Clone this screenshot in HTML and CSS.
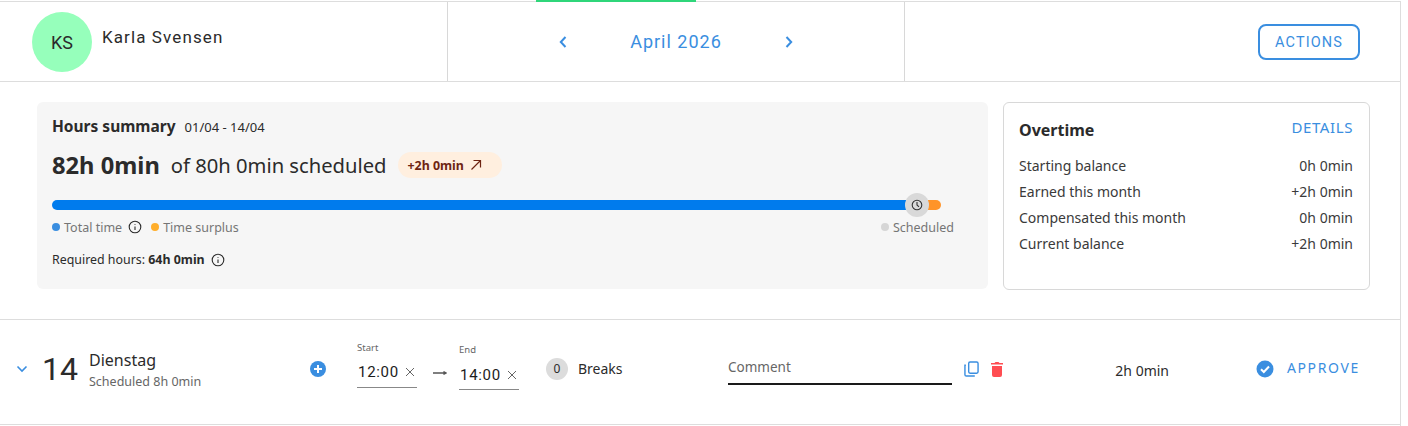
FILE: index.html
```html
<!DOCTYPE html>
<html lang="en">
<head>
  <meta charset="UTF-8" />
  <title>Timesheet</title>
  <link rel="stylesheet" href="styles.css">
</head>
<body>
  <div class="page">
    <header class="top-bar">
      <div class="employee">
        <div class="avatar">KS</div>
        <span class="employee-name">Karla Svensen</span>
      </div>
      <div class="month-nav">
        <span class="month-tab"></span>
        <svg class="chevron" width="12" height="14" viewBox="0 0 12 14"><path d="M8.500 2 L3.800 7 L8.500 12" /></svg>
        <span class="month-label">April 2026</span>
        <svg class="chevron" width="12" height="14" viewBox="0 0 12 14"><path d="M3.500 2 L8.200 7 L3.500 12" /></svg>
      </div>
      <div class="top-actions">
        <button class="actions-btn">ACTIONS</button>
      </div>
    </header>

    <section class="summary-row">
      <!-- Hours summary -->
      <div class="hours-card">
        <div class="hours-title"><strong>Hours summary</strong><span>01/04 - 14/04</span></div>
        <div class="hours-total">
          <strong>82h 0min</strong>
          <span>of 80h 0min scheduled</span>
          <span class="surplus-pill">+2h 0min
            <svg width="12" height="12" viewBox="0 0 12 12"><path d="M1.500 10.500 L10.500 1.500 M3.500 1.500 H10.500 V8.500" /></svg>
          </span>
        </div>
        <div class="progress">
          <div class="progress-blue"></div>
          <div class="progress-orange"></div>
          <div class="progress-knob">
            <svg width="12" height="12" viewBox="0 0 12 12"><circle cx="6" cy="6" r="4.800" /><path d="M6 3 V6 L8 7.800" /></svg>
          </div>
        </div>
        <div class="legend">
          <span class="dot dot-blue"></span><span>Total time</span>
          <svg class="info" width="14" height="14" viewBox="0 0 14 14"><circle cx="7" cy="7" r="5.800" /><path d="M7 6.500 V10 M7 4 V4.800" /></svg>
          <span class="dot dot-orange"></span><span>Time surplus</span>
          <span class="legend-right"><span class="dot dot-grey"></span><span>Scheduled</span></span>
        </div>
        <div class="required"><span>Required hours:&nbsp;</span><strong>64h 0min</strong>
          <svg class="info" width="14" height="14" viewBox="0 0 14 14"><circle cx="7" cy="7" r="5.800" /><path d="M7 6.500 V10 M7 4 V4.800" /></svg>
        </div>
      </div>

      <!-- Overtime -->
      <div class="overtime-card">
        <div class="overtime-head"><strong>Overtime</strong><span class="details-link">DETAILS</span></div>
        <div class="overtime-line"><span>Starting balance</span><span>0h 0min</span></div>
        <div class="overtime-line"><span>Earned this month</span><span>+2h 0min</span></div>
        <div class="overtime-line"><span>Compensated this month</span><span>0h 0min</span></div>
        <div class="overtime-line"><span>Current balance</span><span>+2h 0min</span></div>
      </div>
    </section>

    <section class="day-row">
      <svg class="day-toggle" width="12" height="8" viewBox="0 0 12 8"><path d="M1.500 1.500 L6 6 L10.500 1.500" /></svg>
      <span class="day-num">14</span>
      <div class="day-info">
        <div class="day-name">Dienstag</div>
        <div class="day-sched">Scheduled 8h 0min</div>
      </div>
      <svg class="add-btn" width="18" height="18" viewBox="0 0 18 18"><circle cx="9" cy="9" r="8" /><path d="M9 5 V13 M5 9 H13" /></svg>
      <div class="time-field">
        <label>Start</label>
        <div class="time-value">12:00<svg class="clear" width="10" height="10" viewBox="0 0 10 10"><path d="M1 1 L9 9 M9 1 L1 9" /></svg></div>
      </div>
      <svg class="time-arrow" width="14" height="8" viewBox="0 0 14 8"><path d="M0 4 H12.500 M10.500 2.500 L13 4 L10.500 5.500" /></svg>
      <div class="time-field time-field-end">
        <label>End</label>
        <div class="time-value">14:00<svg class="clear" width="10" height="10" viewBox="0 0 10 10"><path d="M1 1 L9 9 M9 1 L1 9" /></svg></div>
      </div>
      <span class="break-count">0</span>
      <span class="break-label">Breaks</span>
      <div class="comment">Comment</div>
      <svg class="copy-icon" width="15" height="16" viewBox="0 0 16 17"><rect x="5" y="1" width="10" height="12" rx="1.500" /><path d="M2 4.500 H1 V14.500 A1.500 1.500 0 0 0 2.500 16 H11.500" /></svg>
      <svg class="trash-icon" width="14" height="16" viewBox="0 0 14 16"><path d="M2 5 H12 V14 A2 2 0 0 1 10 16 H4 A2 2 0 0 1 2 14 Z M1 2 H4.500 L5.500 1 H8.500 L9.500 2 H13 V3.600 H1 Z" /></svg>
      <span class="day-total">2h 0min</span>
      <svg class="approve-icon" width="18" height="18" viewBox="0 0 18 18"><circle cx="9" cy="9" r="8.500" /><path d="M5 9.300 L7.800 12 L13 6.500" /></svg>
      <span class="approve-label">APPROVE</span>
    </section>
  </div>
</body>
</html>
```

FILE: styles.css
```css
body {
  margin: 0;
  background: #fff;
  color: #2b2b2b;
  font-family: 'Noto Sans', sans-serif;
  overflow: hidden;
}
.page {
  width: 1400px;
  height: 426px;
  border-right: 1px solid #ddd;
}
.top-bar {
  display: flex;
  height: 81px;
  box-sizing: border-box;
  margin-top: 1px;
  border-top: 1px solid #ddd;
  border-bottom: 1px solid #ddd;
}
.employee {
  width: 448px;
  display: flex;
  align-items: flex-start;
  padding: 10px 0 0 32px;
  box-sizing: border-box;
  border-right: 1px solid #d8d8d8;
}
.avatar {
  width: 60px;
  height: 60px;
  border-radius: 50%;
  background: #96ffbb;
  display: flex;
  align-items: center;
  justify-content: center;
  font-family: 'Roboto', sans-serif;
  font-size: 18px;
}
.employee-name {
  margin: 15px 0 0 10px;
  font-family: 'Roboto', sans-serif;
  font-size: 17px;
  letter-spacing: 1.100px;
}
.month-nav {
  position: relative;
  width: 457px;
  box-sizing: border-box;
  display: flex;
  align-items: center;
  justify-content: center;
  gap: 61px;
  border-right: 1px solid #d8d8d8;
  color: #3a8ee0;
}
.month-tab {
  position: absolute;
  top: -2px;
  left: 88px;
  width: 160px;
  height: 2px;
  background: #2fd67a;
}
.chevron path {
  fill: none;
  stroke: #3a8ee0;
  stroke-width: 2;
}
.month-label {
  font-family: 'Roboto', sans-serif;
  font-size: 18px;
  letter-spacing: 1px;
}
.top-actions {
  flex: 1;
  display: flex;
  align-items: center;
  justify-content: flex-end;
  padding-right: 40px;
}
.actions-btn {
  width: 102px;
  height: 36px;
  padding-top: 2px;
  background: #fff;
  border: 2px solid #3a8ee0;
  border-radius: 8px;
  color: #3a8ee0;
  font-family: 'Roboto', sans-serif;
  font-size: 14.500px;
  letter-spacing: 1.100px;
}

.summary-row {
  display: flex;
  gap: 15px;
  padding: 20px 0 0 37px;
  height: 238px;
  box-sizing: border-box;
  border-bottom: 1px solid #ddd;
}
.hours-card {
  width: 951px;
  height: 187px;
  box-sizing: border-box;
  padding: 13px 15px 0;
  background: #f6f6f6;
  border-radius: 6px;
  font-size: 12px;
}
.hours-title {
  display: flex;
  align-items: baseline;
  gap: 9px;
  font-size: 13px;
}
.hours-title strong {
  font-size: 15.500px;
  font-weight: 700;
}
.hours-total {
  display: flex;
  align-items: center;
  margin-top: 12px;
  font-size: 20.200px;
}
.hours-total strong {
  font-size: 23.700px;
  margin-right: 11px;
}
.surplus-pill {
  display: flex;
  align-items: center;
  gap: 6px;
  height: 26px;
  margin-left: 11px;
  padding: 0 20px 0 10px;
  border-radius: 13px;
  background: #ffefdf;
  color: #6e2412;
  font-size: 12.400px;
  font-weight: 700;
}
.surplus-pill svg path {
  fill: none;
  stroke: #6e2412;
  stroke-width: 1.200;
}
.progress {
  position: relative;
  display: flex;
  width: 889px;
  height: 10px;
  margin-top: 19px;
}
.progress-blue {
  flex: 1;
  background: #007bed;
  border-radius: 5px 0 0 5px;
}
.progress-orange {
  width: 24px;
  background: #ff9429;
  border-radius: 0 5px 5px 0;
}
.progress-knob {
  position: absolute;
  left: 853px;
  top: -7px;
  width: 24px;
  height: 24px;
  border-radius: 50%;
  background: #d9d9d9;
  display: flex;
  align-items: center;
  justify-content: center;
}
.progress-knob svg * {
  fill: none;
  stroke: #333;
  stroke-width: 1.100;
}
.legend {
  display: flex;
  align-items: center;
  margin-top: 10px;
  color: #757575;
  font-size: 12.500px;
  height: 14px;
}
.dot {
  width: 8px;
  height: 8px;
  border-radius: 50%;
  margin-right: 4px;
}
.dot-blue { background: #3a8ee0; }
.dot-orange { background: #ffae2b; margin-left: 9px; }
.dot-grey { background: #d6d6d6; }
.info {
  margin-left: 6px;
}
.info * {
  fill: none;
  stroke: #2b2b2b;
  stroke-width: 1.100;
}
.legend-right {
  display: flex;
  align-items: center;
  margin-left: auto;
  margin-right: 19px;
}
.required {
  display: flex;
  align-items: center;
  margin-top: 17px;
  font-size: 12.400px;
}
.overtime-card {
  width: 367px;
  height: 188px;
  box-sizing: border-box;
  padding: 16px 16px 0 15px;
  border: 1px solid #d8d8d8;
  border-radius: 6px;
  font-size: 14px;
}
.overtime-head {
  display: flex;
  justify-content: space-between;
  margin-bottom: 15px;
}
.overtime-head strong {
  font-size: 16px;
}
.details-link {
  margin-top: -2px;
  color: #3a8ee0;
  font-size: 15px;
  letter-spacing: 0.600px;
}
.overtime-line {
  display: flex;
  justify-content: space-between;
  height: 26px;
  color: #3a3a3a;
}

.day-row {
  display: flex;
  align-items: center;
  height: 105px;
  box-sizing: border-box;
  padding-bottom: 7px;
  border-bottom: 1px solid #ddd;
}
.day-toggle {
  margin-left: 16px;
}
.day-toggle path {
  fill: none;
  stroke: #3a8ee0;
  stroke-width: 1.600;
}
.day-num {
  width: 47px;
  margin-left: 14px;
  font-family: 'Roboto', sans-serif;
  font-size: 32px;
}
.day-info {
  width: 220px;
  margin-top: 4px;
}
.day-name {
  font-size: 16px;
  line-height: 20px;
}
.day-sched {
  margin-top: 2px;
  font-size: 12.500px;
  line-height: 20px;
  color: #666;
}
.add-btn circle { fill: #3a8ee0; }
.add-btn path {
  stroke: #fff;
  stroke-width: 2;
}
.time-field {
  width: 60px;
  margin-left: 30px;
  margin-top: -9px;
}
.time-field label {
  display: block;
  font-size: 9.500px;
  color: #666;
  margin-bottom: 6px;
}
.time-value {
  display: flex;
  justify-content: space-between;
  align-items: center;
  height: 25px;
  padding: 0 0 2px 1px;
  border-bottom: 1px solid #888;
  font-family: 'Roboto', sans-serif;
  font-size: 15px;
  letter-spacing: 0.700px;
  color: #1c1c1c;
}
.clear {
  margin-right: 2px;
}
.clear path {
  fill: none;
  stroke: #666;
  stroke-width: 1;
}
.time-arrow {
  margin: 8px 12px 0 16px;
}
.time-arrow path {
  fill: none;
  stroke: #555;
  stroke-width: 1.300;
}
.time-field-end {
  margin-left: 0;
  margin-top: -4px;
}
.break-count {
  width: 22px;
  height: 22px;
  margin-left: 27px;
  border-radius: 50%;
  background: #dcdcdc;
  display: flex;
  align-items: center;
  justify-content: center;
  font-size: 12px;
}
.break-label {
  width: 150px;
  margin-left: 10px;
  font-size: 14px;
}
.comment {
  width: 224px;
  height: 25px;
  margin-top: 5px;
  border-bottom: 2px solid #1a1a1a;
  font-size: 13.500px;
  color: #666;
}
.copy-icon {
  margin-left: 12px;
}
.copy-icon * {
  fill: none;
  stroke: #3a8ee0;
  stroke-width: 1.500;
}
.trash-icon {
  margin-left: 11px;
}
.trash-icon path { fill: #ff4d52; }
.day-total {
  width: 165px;
  margin-top: 3px;
  text-align: right;
  font-size: 14px;
}
.approve-icon {
  margin-left: 87px;
}
.approve-icon circle { fill: #3a8ee0; }
.approve-icon path {
  fill: none;
  stroke: #fff;
  stroke-width: 2;
}
.approve-label {
  margin-left: 13px;
  margin-top: -2px;
  color: #3a8ee0;
  font-size: 14px;
  letter-spacing: 1.600px;
}
```
